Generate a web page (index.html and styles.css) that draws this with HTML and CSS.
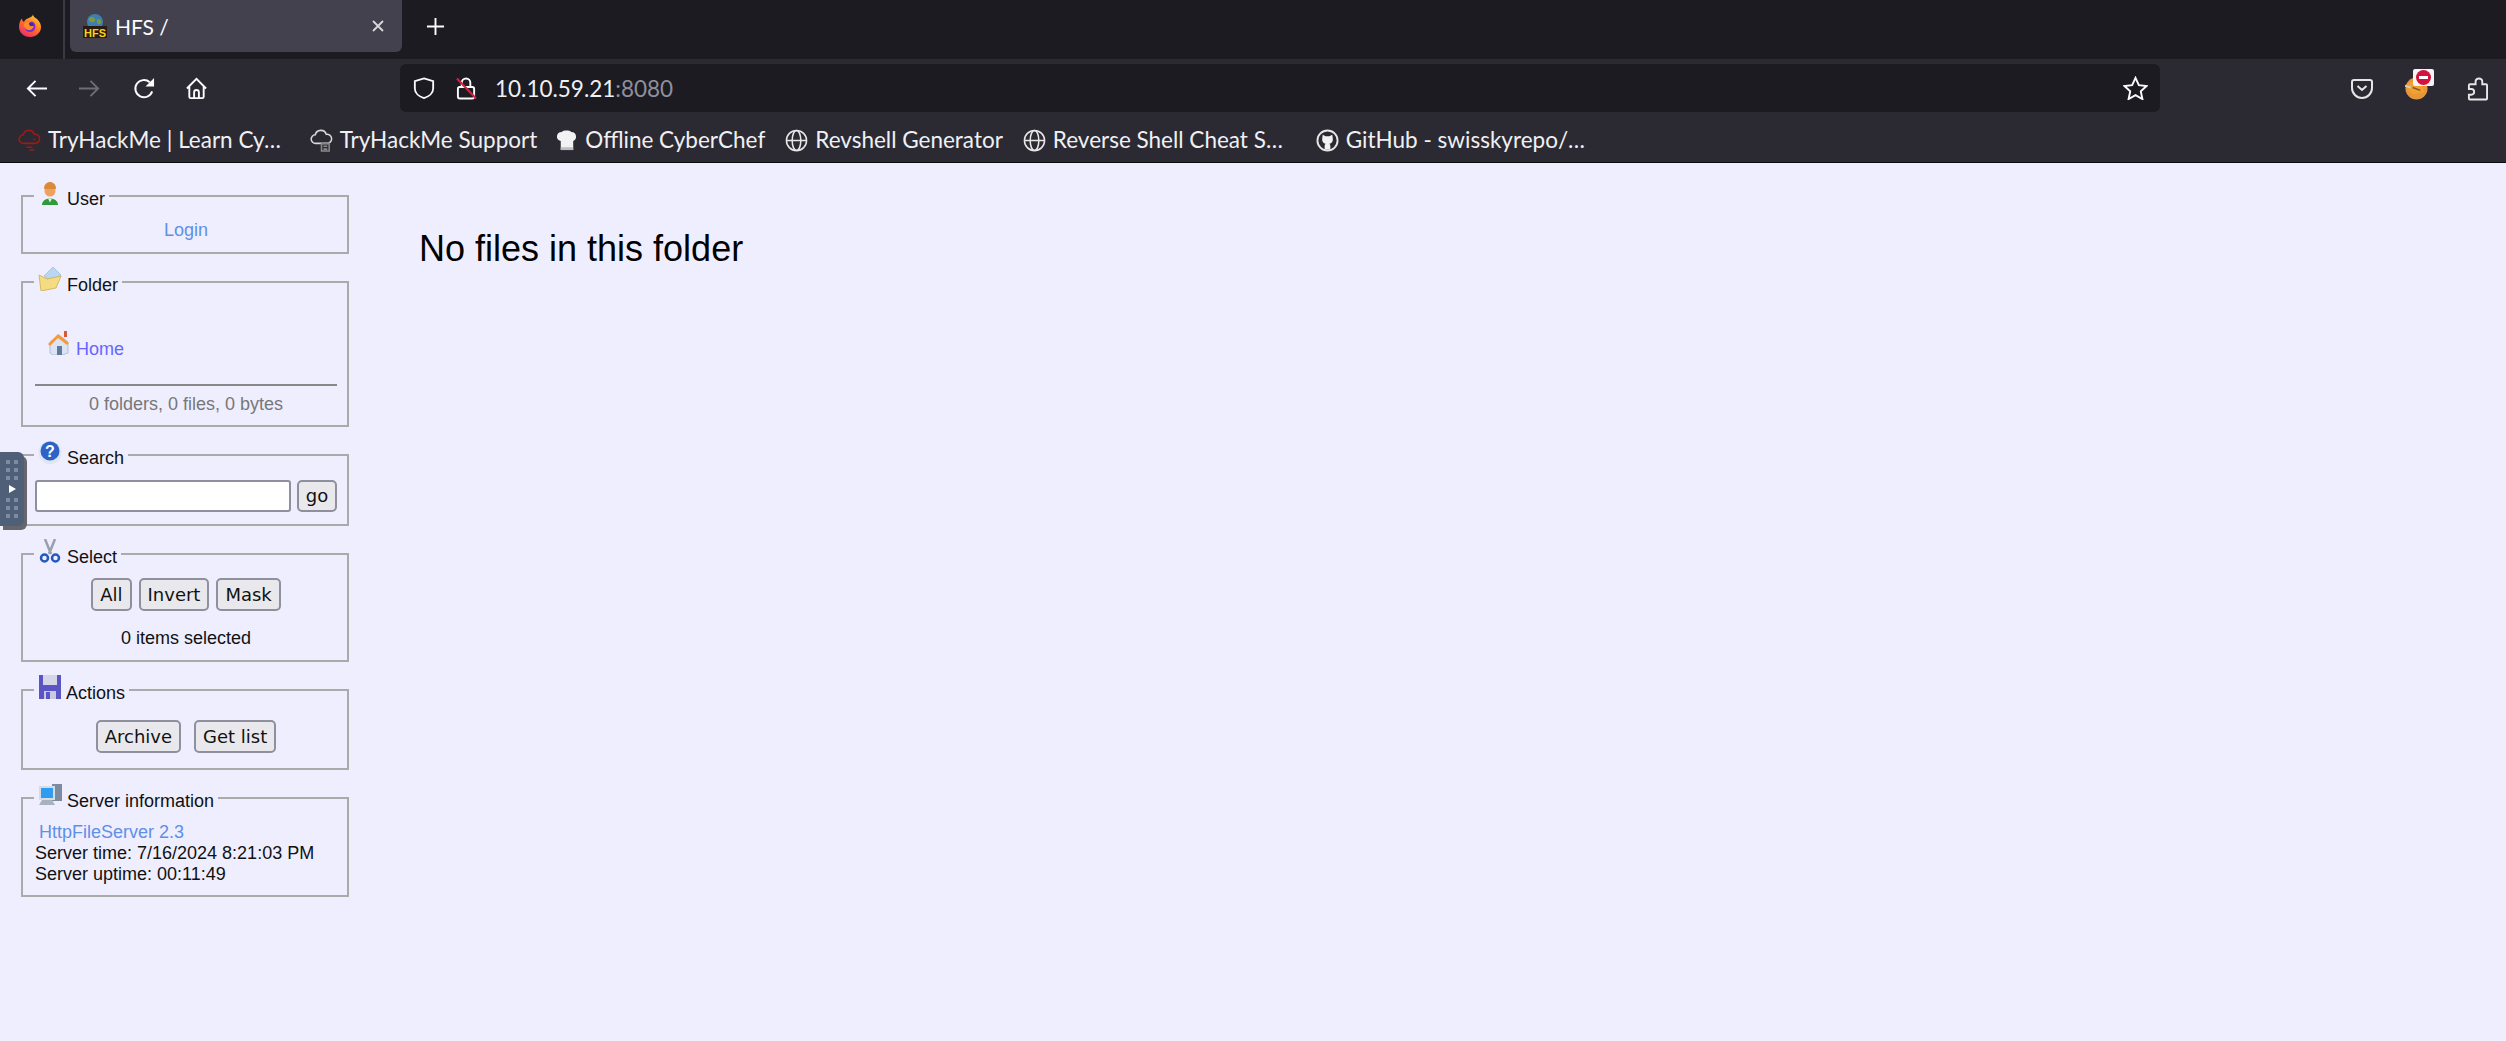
FILE: index.html
```html
<!DOCTYPE html>
<html lang="en">
<head>
<meta charset="utf-8">
<title>HFS /</title>
<link rel="stylesheet" href="styles.css">
</head>
<body>
<header class="chrome">
  <div class="tabstrip">
    <div class="ff-slot">
      <svg class="ic24" viewBox="0 0 24 24"><defs><linearGradient id="ffg" x1="0.8" y1="0" x2="0.2" y2="1"><stop offset="0" stop-color="#ffd23a"/><stop offset="0.45" stop-color="#ff7a1e"/><stop offset="1" stop-color="#f0246e"/></linearGradient></defs><path d="M15 1c0 3 2.500 3.500 4.500 5.500C22 9 23 11.500 23 14c0 5.500-4.500 10-11 10S1 19.500 1 13.500C1 9 3 6.500 4 5.500c0 2 1 3 2 3.500C7 6 10 5.500 12 4.500 14 3.500 15 2.500 15 1z" fill="url(#ffg)"/><circle cx="12" cy="13.500" r="5.500" fill="#7a2fd0"/><circle cx="13" cy="12.500" r="2.800" fill="#3f2a9e"/><path d="M6 11c2-3 6-3.500 8-2.500-2 .2-3 1-3 2.500 0 2 3 3 5 1.500-.5 3-3 5-5.500 4.500C7.500 16.500 5.500 14 6 11z" fill="#ff8a2a"/></svg>
    </div>
    <div class="tab">
      <svg class="ic24" viewBox="0 0 24 24"><circle cx="12" cy="8" r="8" fill="#3f7fb0"/><path d="M6 4c3-2 5-1 6 1s-2 4-4 3-3-2-2-4zm9 1c2 0 4 2 3 4s-4 1-4-1 0-3 1-3z" fill="#7c9a3c"/><rect x="0" y="12" width="24" height="12" fill="#2a1a10"/><text x="12" y="22.500" class="hfs-mark">HFS</text></svg>
      <span class="tab-title">HFS /</span>
      <svg class="tab-close" viewBox="0 0 14 14"><path d="M2 2l10 10M12 2L2 12"/></svg>
    </div>
    <svg class="tab-new" viewBox="0 0 20 20"><path d="M10 1v18M1 10h18"/></svg>
  </div>
  <div class="navbar">
    <svg class="nav-ic back" viewBox="0 0 24 24"><path d="M23 12H3M11 4l-8 8 8 8"/></svg>
    <svg class="nav-ic fwd" viewBox="0 0 24 24"><path d="M1 12h20M13 4l8 8-8 8"/></svg>
    <svg class="nav-ic reload" viewBox="0 0 24 24"><path d="M20 15a9 9 0 1 1-2.500-9.500"/><path class="solid" d="M22 1v9h-9z"/></svg>
    <svg class="nav-ic home" viewBox="0 0 24 24"><path d="M2 12L12 2l10 10M4.500 10v10.500a1.500 1.500 0 0 0 1.500 1.500h12a1.500 1.500 0 0 0 1.500-1.500V10M9.500 22v-6a2.500 2.500 0 0 1 5 0v6"/></svg>
    <div class="urlbar">
      <svg class="url-shield" viewBox="0 0 24 24"><path d="M12 1.500l10 3v8c0 5-4.500 9-10 10.500C6.500 21.500 2 17.500 2 12.500v-8z"/></svg>
      <svg class="url-lock" viewBox="0 0 22 24"><rect class="lk" x="2" y="11" width="17" height="12" rx="2"/><path class="lk" d="M6 11V6.500a4.500 4.500 0 0 1 9 0V11"/><path class="lk-slash" d="M1 2l20 21"/></svg>
      <span class="url-text">10.10.59.21<span class="url-port">:8080</span></span>
      <svg class="url-star" viewBox="0 0 26 24"><path d="M13 1.500l3.500 7.500 8 1-6 5.500 1.700 8L13 19.500 5.800 23.500l1.700-8-6-5.500 8-1z"/></svg>
    </div>
    <div class="nav-right">
      <svg class="tool-ic" viewBox="0 0 22 20"><path d="M3 1h16a2 2 0 0 1 2 2v6a10 10 0 0 1-20 0V3a2 2 0 0 1 2-2zM6.500 7l4.500 4 4.500-4"/></svg>
      <div class="addon">
        <svg class="addon-fox" viewBox="0 0 24 24"><circle cx="12" cy="12" r="11.500" fill="#e8963a"/><path d="M0 9l7-4 11 2 2 9-12 2z" fill="#f2a030"/><path d="M8 11l8 3" stroke="#7c5a30" stroke-width="1.500"/><path d="M0 9l6 2" stroke="#cfcfcf" stroke-width="2"/></svg>
        <div class="addon-badge"><span class="badge-dot"></span></div>
      </div>
      <svg class="tool-ic puzzle" viewBox="0 0 22 24"><path d="M9 5.500V4a3.500 3 0 0 1 7 0v3h4a1 1 0 0 1 1 1v14a1 1 0 0 1-1 1H3a1 1 0 0 1-1-1v-4h2.500a2.500 2.500 0 0 0 0-6H2V8a1 1 0 0 1 1-1h6z"/></svg>
    </div>
  </div>
  <nav class="bookmarks">
    <a class="bm bm-a"><svg class="ic24" viewBox="0 0 24 24"><path class="cloud red" d="M6 15a4.500 4.500 0 0 1-.5-9A6 6 0 0 1 17 5.500a4.800 4.800 0 0 1 1.500 9.500H6z"/><path class="cloud red" d="M9 19h6M12 22h5M16 11h2"/></svg><span>TryHackMe | Learn Cy…</span></a>
    <a class="bm bm-b"><svg class="ic24" viewBox="0 0 24 24"><path class="cloud" d="M6 15a4.500 4.500 0 0 1-.5-9A6 6 0 0 1 17 5.500a4.800 4.800 0 0 1 1.500 9.500H6z"/><path class="cloud dim" d="M12 15h8v8h-8zM14 18h4M14 21h4"/></svg><span>TryHackMe Support</span></a>
    <a class="bm bm-c"><svg class="ic24" viewBox="0 0 24 24"><path d="M7 3c2-2 8-2 10 0 3 0 5 2 5 5 0 2-1 3.500-3 4.500V22H6V12.500C3 11.500 2 10 2 8c0-3 2-5 5-5z" fill="#f2f2f2"/><path d="M6 19h13v3H6z" fill="#bdbdbd"/></svg><span>Offline CyberChef</span></a>
    <a class="bm bm-d"><svg class="ic24 globe" viewBox="0 0 24 24"><circle cx="12" cy="12" r="10.500"/><ellipse cx="12" cy="12" rx="4.500" ry="10.500"/><path d="M1.500 12h21"/></svg><span>Revshell Generator</span></a>
    <a class="bm bm-e"><svg class="ic24 globe" viewBox="0 0 24 24"><circle cx="12" cy="12" r="10.500"/><ellipse cx="12" cy="12" rx="4.500" ry="10.500"/><path d="M1.500 12h21"/></svg><span>Reverse Shell Cheat S…</span></a>
    <a class="bm bm-f"><svg class="ic24" viewBox="0 0 24 24"><circle cx="12" cy="12" r="10.500" fill="none" stroke="#e6e6e6" stroke-width="2"/><path d="M7 6l3 1.500h4L17 6l.5 4c.5 3-1 5-3.500 5.500.7.700 1 1.500 1 2.500v3.500h-6V18c0-1 .3-1.800 1-2.500C7.500 15 6 13 6.500 10z" fill="#f2f2f2"/></svg><span>GitHub - swisskyrepo/…</span></a>
  </nav>
</header>

<div class="page">
  <aside class="sidebar">
    <fieldset class="panel panel-user">
      <legend><svg class="ic24" viewBox="0 0 24 24"><path d="M4 24c0-4 3.500-6.500 8-6.500s8 2.500 8 6.500z" fill="#2f9a3a"/><path d="M10 17.500l2 4 2-4z" fill="#e8f2e0"/><circle cx="12" cy="10" r="5.500" fill="#f0a060"/><path d="M6 8C6 3 9 1 12 1s6 2 6 7z" fill="#d98a3a"/></svg> User</legend>
      <div class="center"><a class="link">Login</a></div>
    </fieldset>
    <fieldset class="panel panel-folder">
      <legend><svg class="ic24" viewBox="0 0 24 24"><path d="M6 9l9-9 8 8-8 8z" fill="#b9d6f2" stroke="#8fb0d0" stroke-width=".6"/><path d="M1 8l8 4 14-3-5 12-15 3z" fill="#f5dc82" stroke="#c9ae52" stroke-width=".8"/></svg> Folder</legend>
      <div class="crumb"><svg class="ic24" viewBox="0 0 24 24"><path d="M3 11L12 4l9 7v11l-6 2H6l-3-2z" fill="#dbe4f0" stroke="#9fb0c8" stroke-width=".7"/><path d="M1 13L11 3l11 9-2 2-9-7-8 8z" fill="#f59a3c"/><rect x="17" y="0" width="3" height="6" fill="#d9583a"/><rect x="10" y="15" width="5" height="9" fill="#5f7aa0"/></svg> <a class="link-home">Home</a></div>
      <hr class="rule">
      <div class="center muted">0 folders, 0 files, 0 bytes</div>
    </fieldset>
    <fieldset class="panel panel-search">
      <legend><svg class="ic24" viewBox="0 0 24 24"><circle cx="12" cy="12.500" r="11.500" fill="#dfe6f2"/><circle cx="12" cy="11" r="9.500" fill="#2e62c8"/><text x="12" y="17" class="qmark">?</text></svg> Search</legend>
      <div class="search-row"><input class="field" type="text" aria-label="Search"><button class="btn" type="button">go</button></div>
    </fieldset>
    <fieldset class="panel panel-select">
      <legend><svg class="ic24" viewBox="0 0 24 24"><path d="M7 0l6 15M17 0l-6 15" stroke="#9aa0aa" stroke-width="2.500" fill="none"/><circle cx="6.500" cy="19" r="3.500" fill="none" stroke="#2459c0" stroke-width="2.500"/><circle cx="17.500" cy="19" r="3.500" fill="none" stroke="#2459c0" stroke-width="2.500"/></svg> Select</legend>
      <div class="center btns-tight"><button class="btn" type="button">All</button><button class="btn" type="button">Invert</button><button class="btn" type="button">Mask</button></div>
      <div class="center selected-count">0 items selected</div>
    </fieldset>
    <fieldset class="panel panel-actions">
      <legend><svg class="ic24" viewBox="0 0 24 24"><path d="M1 0h22v24H1z" fill="#5a54c4"/><path d="M5 0h14v10H5z" fill="#d5d5e8"/><path d="M6 16h12v8H6z" fill="#c8c8e0"/><path d="M8 17h4v7H8z" fill="#5a54c4"/></svg> Actions</legend>
      <div class="center btns-wide"><button class="btn" type="button">Archive</button><button class="btn" type="button">Get list</button></div>
    </fieldset>
    <fieldset class="panel panel-server">
      <legend><svg class="ic24" viewBox="0 0 24 24"><path d="M14 1h10v17H14z" fill="#7d8aa0"/><path d="M1 3h16v14H1z" fill="#d5dce6"/><path d="M3 5h12v10H3z" fill="#2f9cf0"/><path d="M4 17h10l3 5H1z" fill="#aab2c0"/></svg> Server information</legend>
      <div class="server-link"><a class="link">HttpFileServer 2.3</a></div>
      <div>Server time: 7/16/2024 8:21:03 PM</div>
      <div>Server uptime: 00:11:49</div>
    </fieldset>
  </aside>
  <main class="content">
    <h1 class="empty">No files in this folder</h1>
  </main>
</div>

<div class="sidetab">
  <div class="dots"><i></i><i></i><i></i><i></i><i></i><i></i></div>
  <span class="play"></span>
  <div class="dots"><i></i><i></i><i></i><i></i><i></i><i></i></div>
</div>
</body>
</html>
```
FILE: styles.css
```css
* { box-sizing: border-box; }
html, body { margin: 0; height: 100%; }
body {
  background: #eef;
  color: #111;
  font-family: "Liberation Sans", Arial, sans-serif;
  font-size: 18px;
  line-height: 21px;
  overflow: hidden;
}
.ic24 { width: 24px; height: 24px; flex: none; }

/* browser chrome */
.chrome { font-family: Lato, "Noto Sans", sans-serif; color: #fbfbfe; line-height: 1; }
.tabstrip { height: 59px; background: #1c1b22; display: flex; align-items: flex-start; }
.ff-slot { width: 65px; height: 59px; padding: 13px 0 0 18px; border-right: 2px solid #3a3a42; flex: none; }
.tab {
  margin-left: 5px; width: 332px; height: 52px; background: #42414d; border-radius: 0 0 6px 6px;
  display: flex; align-items: center; padding: 0 17px 0 13px; flex: none;
}
.hfs-mark { font: 700 11px "Liberation Sans", sans-serif; fill: #f7d31c; text-anchor: middle; }
.tab-title { font-size: 21px; margin-left: 8px; flex: 1; }
.tab-close { width: 14px; height: 14px; fill: none; stroke: #d8d8dc; stroke-width: 1.800; }
.tab-new { width: 19px; height: 19px; margin: 17px 0 0 24px; fill: none; stroke: #fbfbfe; stroke-width: 2; flex: none; }

.navbar { height: 54px; background: #2b2a33; display: flex; align-items: flex-start; padding: 5px 24px 0 25px; }
.nav-ic { width: 23px; height: 23px; margin-top: 13px; fill: none; stroke: #fbfbfe; stroke-width: 2; flex: none; }
.nav-ic .solid { fill: #fbfbfe; stroke: none; }
.fwd { margin-left: 30px; stroke: #6e6d75; }
.reload { margin-left: 32px; }
.home { margin-left: 29px; }
.urlbar {
  margin-left: 192px; width: 1760px; height: 48px; background: #1c1b22; border-radius: 6px;
  display: flex; align-items: center; padding-left: 13px; flex: none;
}
.url-shield { width: 22px; height: 24px; fill: none; stroke: #fbfbfe; stroke-width: 2; flex: none; }
.url-lock { width: 21px; height: 24px; margin-left: 21px; flex: none; }
.lk { fill: none; stroke: #fbfbfe; stroke-width: 2; }
.lk-slash { fill: none; stroke: #e0193f; stroke-width: 2.200; }
.url-text { margin-left: 18px; padding-top: 2px; font-size: 22.500px; flex: 1; color: #f0f0f4; }
.url-port { color: #8f8f9d; }
.url-star { width: 25px; height: 24px; margin-right: 12px; fill: none; stroke: #fbfbfe; stroke-width: 2; flex: none; }
.nav-right { display: flex; align-items: flex-start; margin-left: 191px; }
.tool-ic { width: 22px; height: 20px; margin-top: 15px; fill: none; stroke: #e6e6e8; stroke-width: 2; flex: none; }
.puzzle { width: 21px; height: 24px; margin: 13px 0 0 33px; }
.addon { width: 29px; height: 36px; margin-left: 32px; position: relative; flex: none; }
.addon-fox { width: 23px; height: 23px; position: absolute; left: 0; top: 13px; }
.addon-badge {
  position: absolute; left: 8px; top: 5px; width: 21px; height: 17px; background: #f6f4f6; border-radius: 2px;
  display: flex; align-items: center; justify-content: center;
}
.badge-dot { width: 15px; height: 15px; border-radius: 50%; background: #d3133d; position: relative; }
.badge-dot::after { content: ""; position: absolute; left: 3px; right: 3px; top: 6px; height: 3px; background: #fff; }

.bookmarks {
  height: 50px; background: #2b2a33; border-bottom: 1px solid #0c0c10;
  display: flex; align-items: center; padding: 6px 0 0 18px; font-size: 22.500px;
}
.bm { display: flex; align-items: center; gap: 7px; color: #f0f0f4; white-space: nowrap; }
.bm-b { margin-left: 29px; }
.bm-c { margin-left: 18px; }
.bm-d { margin-left: 20px; }
.bm-e { margin-left: 20px; }
.bm-f { margin-left: 33px; }
.bm .ic24 { width: 23px; height: 23px; }
.cloud { fill: none; stroke: #d8d8d8; stroke-width: 1.600; }
.cloud.red { stroke: #a01818; }
.cloud.dim { stroke: #8a8a8a; }
.globe { fill: none; stroke: #e6e6e6; stroke-width: 1.600; }

/* HFS page */
.page { display: flex; align-items: flex-start; padding: 18px 0 0 21px; }
.sidebar { width: 328px; flex: none; }
.panel { margin: 0 0 13px; padding: 10px 10px 11px 12px; border: 2px solid #aaa; min-width: 0; }
.panel legend { margin-left: -1px; padding: 0 4px; white-space: nowrap; }
.center { text-align: center; }
.link { color: #5f8fe8; }
.link-home { color: #66f; }
.crumb { margin: 25px 0 0 12px; }
.rule { height: 2px; margin: 24px 0 8px; border: 0; background: #888; }
.muted { color: #777; }
.panel-folder { padding-bottom: 10px; }
.panel-search { padding-top: 11px; padding-bottom: 12px; }
.search-row { display: flex; gap: 6px; }
.field { flex: 1; min-width: 0; height: 32px; background: #fff; border: 2px solid #8f8f9d; border-radius: 3px; }
.btn {
  height: 33px; padding: 0 7px; background: #e9e9ed; color: #111; border: 2px solid #8f8f9d; border-radius: 5px;
  font: 18px/1 "DejaVu Sans", sans-serif;
}
.search-row .btn { height: 32px; width: 40px; padding: 0; }
.btns-tight { display: flex; justify-content: center; gap: 7px; }
.selected-count { margin-top: 17px; }
.btns-wide { display: flex; justify-content: center; gap: 13px; margin: 6px 0 4px; }
.server-link { padding-left: 4px; }
.panel-server { padding-bottom: 10px; }
.content { padding: 47px 0 0 70px; }
.empty { margin: 0; font-size: 36px; line-height: 42px; font-weight: 400; color: #000; }
.qmark { font: 700 16px "Liberation Sans", sans-serif; fill: #fff; text-anchor: middle; }

/* overlay handle */
.sidetab {
  position: absolute; left: 0; top: 452px; width: 24px; height: 74px; background: #4f5f78;
  border-radius: 0 6px 6px 0; box-shadow: 3px 4px 0 #66666c;
  display: flex; flex-direction: column; align-items: center; justify-content: space-between; padding: 8px 0;
}
.dots { display: grid; grid-template-columns: 4px 4px; gap: 4px; }
.dots i { width: 4px; height: 4px; background: #7d8ba0; }
.play { width: 0; height: 0; border-left: 7px solid #fff; border-top: 4px solid transparent; border-bottom: 4px solid transparent; }
```
